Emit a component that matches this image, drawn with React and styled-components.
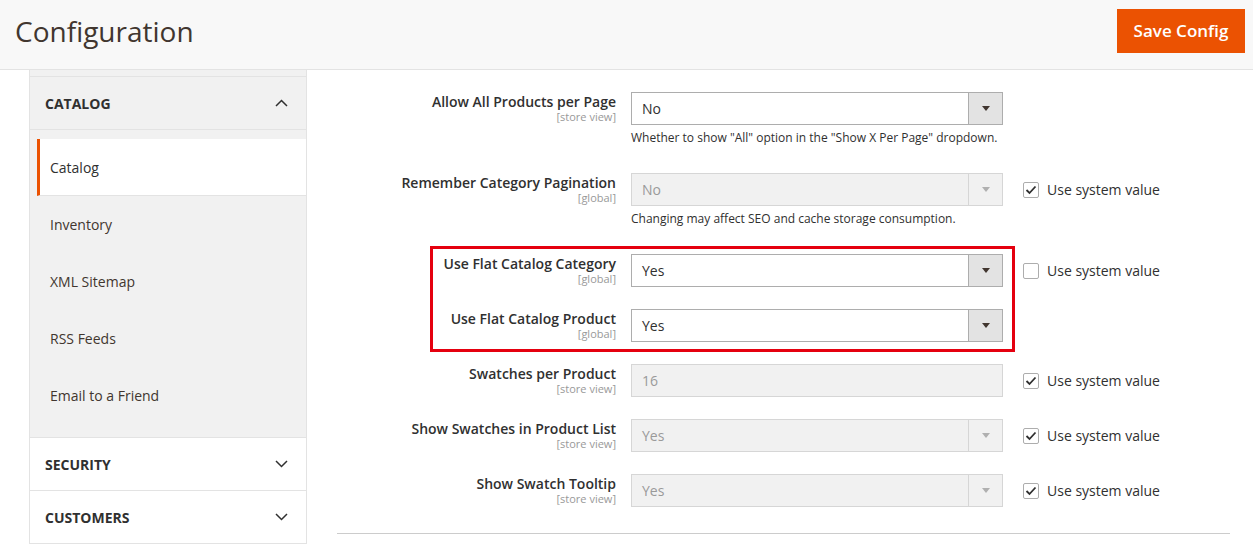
import React from 'react';
import styled, {createGlobalStyle} from 'styled-components';

const GlobalStyle = createGlobalStyle`
  body {
    margin: 0;
    background: #fff;
    font-family: "Open Sans", "Liberation Sans", sans-serif;
    color: #303030;
  }
`;

const Header = styled.div`
  height: 69px;
  background: #f8f8f8;
  border-bottom: 1px solid #e3e3e3;
  display: flex;
  align-items: center;
  justify-content: space-between;
  padding: 0 8px 0 15px;
`;

const Title = styled.h1`
  margin: 0;
  font-size: 28px;
  font-weight: 400;
  color: #41362f;
  position: relative;
  top: -4px;
`;

const SaveButton = styled.button`
  width: 128px;
  height: 44px;
  background: #eb5202;
  border: 0;
  color: #fff;
  font-family: inherit;
  font-size: 17px;
  font-weight: 600;
  position: relative;
  top: -4px;
`;

const Body = styled.div`
  display: flex;
  align-items: flex-start;
`;

const Sidebar = styled.div`
  width: 276px;
  margin-left: 29px;
  border-left: 1px solid #e3e3e3;
  border-right: 1px solid #e3e3e3;
`;

const SidebarTop = styled.div`
  height: 6px;
  background: #f1f1f1;
  border-bottom: 1px solid #e3e3e3;
`;

const SectionTitle = styled.div`
  height: 52px;
  display: flex;
  align-items: center;
  justify-content: space-between;
  padding: 0 18px 0 15px;
  background: ${p => (p.open ? '#f1f1f1' : '#fff')};
  border-bottom: 1px solid #e3e3e3;
  font-size: 14px;
  font-weight: 700;
  color: #303030;
`;

const NavList = styled.div`
  background: #f1f1f1;
  padding: 9px 0 13px 7px;
  border-bottom: 1px solid #e3e3e3;
`;

const NavItem = styled.div`
  height: 57px;
  display: flex;
  align-items: center;
  box-sizing: border-box;
  padding-left: 10px;
  border-left: 3px solid ${p => (p.active ? '#eb5202' : 'transparent')};
  background: ${p => (p.active ? '#fff' : 'transparent')};
  border-bottom: 1px solid ${p => (p.active ? '#e3e3e3' : 'transparent')};
  font-size: 14px;
  color: ${p => (p.active ? '#303030' : '#41362f')};
`;

const Main = styled.div`
  flex: 1;
  padding: 22px 23px 0 30px;
`;

const Row = styled.div`
  display: flex;
  align-items: flex-start;
  margin-bottom: 22px;
`;

const LabelCol = styled.div`
  width: 279px;
  margin-right: 15px;
  text-align: right;
`;

const Label = styled.div`
  font-size: 14px;
  font-weight: 600;
  line-height: 20px;
  color: #303030;
`;

const Scope = styled.div`
  font-size: 11px;
  line-height: 10px;
  color: #999;
`;

const ControlCol = styled.div`
  width: 372px;
`;

const SelectBox = styled.div`
  height: 33px;
  box-sizing: border-box;
  display: flex;
  align-items: stretch;
  border: 1px solid ${p => (p.disabled ? '#d6d6d6' : '#adadad')};
  background: ${p => (p.disabled ? '#f1f1f1' : '#fff')};
  font-size: 14px;
  color: ${p => (p.disabled ? '#9a9a9a' : '#303030')};
`;

const SelectValue = styled.div`
  flex: 1;
  display: flex;
  align-items: center;
  padding-left: 10px;
`;

const Arrow = styled.div`
  width: 33px;
  display: flex;
  align-items: center;
  justify-content: center;
  background: ${p => (p.disabled ? '#f1f1f1' : '#e3e3e3')};
  border-left: 1px solid ${p => (p.disabled ? '#d6d6d6' : '#adadad')};
  &::after {
    content: '';
    border-left: 4px solid transparent;
    border-right: 4px solid transparent;
    border-top: 5px solid ${p => (p.disabled ? '#b0b0b0' : '#41362f')};
  }
`;

const Note = styled.div`
  font-size: 12px;
  line-height: 18px;
  margin: 4px 0;
  color: #303030;
`;

const SystemValue = styled.label`
  height: 33px;
  margin-left: 20px;
  display: flex;
  align-items: center;
  gap: 8px;
  font-size: 14px;
  color: #303030;
`;

const Box = styled.span`
  width: 16px;
  height: 16px;
  box-sizing: border-box;
  border: 1px solid #adadad;
  border-radius: 2px;
  background: #fff;
  display: flex;
  align-items: center;
  justify-content: center;
`;

const Highlight = styled.div`
  position: relative;
  &::after {
    content: '';
    position: absolute;
    top: -8px;
    left: 93px;
    width: 585px;
    height: 106px;
    box-sizing: border-box;
    border: 3px solid #e5000f;
    pointer-events: none;
  }
`;

const Divider = styled.div`
  border-top: 1px solid #cccccc;
  margin-top: 26px;
`;

const Chevron = ({up}) => (
  <svg width="13" height="8" viewBox="0 0 13 8">
    <polyline
      points={up ? '1,7 6.5,1.5 12,7' : '1,1 6.5,6.5 12,1'}
      fill="none"
      stroke="#303030"
      strokeWidth="1.5"
    />
  </svg>
);

const Check = () => (
  <svg width="12" height="10" viewBox="0 0 12 10">
    <polyline points="1.5,5 4.5,8 10.5,1.5" fill="none" stroke="#303030" strokeWidth="1.8"/>
  </svg>
);

const SystemCheck = ({checked}) => (
  <SystemValue>
    <Box>{checked && <Check/>}</Box>
    Use system value
  </SystemValue>
);

const Field = ({label, scope, value, disabled, input, note, system}) => (
  <Row>
    <LabelCol>
      <Label>{label}</Label>
      <Scope>[{scope}]</Scope>
    </LabelCol>
    <ControlCol>
      <SelectBox disabled={disabled}>
        <SelectValue>{value}</SelectValue>
        {!input && <Arrow disabled={disabled}/>}
      </SelectBox>
      {note && <Note>{note}</Note>}
    </ControlCol>
    {system !== undefined && <SystemCheck checked={system}/>}
  </Row>
);

const navItems = ['Catalog', 'Inventory', 'XML Sitemap', 'RSS Feeds', 'Email to a Friend'];

export default function App() {
  return (
    <>
      <GlobalStyle/>
      <Header>
        <Title>Configuration</Title>
        <SaveButton>Save Config</SaveButton>
      </Header>
      <Body>
        <Sidebar>
          <SidebarTop/>
          <SectionTitle open>CATALOG <Chevron up/></SectionTitle>
          <NavList>
            {navItems.map((item, i) => (
              <NavItem key={item} active={i === 0}>{item}</NavItem>
            ))}
          </NavList>
          <SectionTitle>SECURITY <Chevron/></SectionTitle>
          <SectionTitle>CUSTOMERS <Chevron/></SectionTitle>
        </Sidebar>
        <Main>
          <Field
            label="Allow All Products per Page"
            scope="store view"
            value="No"
            note={'Whether to show "All" option in the "Show X Per Page" dropdown.'}
          />
          <Field
            label="Remember Category Pagination"
            scope="global"
            value="No"
            disabled
            system
            note="Changing may affect SEO and cache storage consumption."
          />
          <Highlight>
            <Field label="Use Flat Catalog Category" scope="global" value="Yes" system={false}/>
            <Field label="Use Flat Catalog Product" scope="global" value="Yes"/>
          </Highlight>
          <Field label="Swatches per Product" scope="store view" value="16" disabled input system/>
          <Field label="Show Swatches in Product List" scope="store view" value="Yes" disabled system/>
          <Field label="Show Swatch Tooltip" scope="store view" value="Yes" disabled system/>
          <Divider/>
        </Main>
      </Body>
    </>
  );
}
